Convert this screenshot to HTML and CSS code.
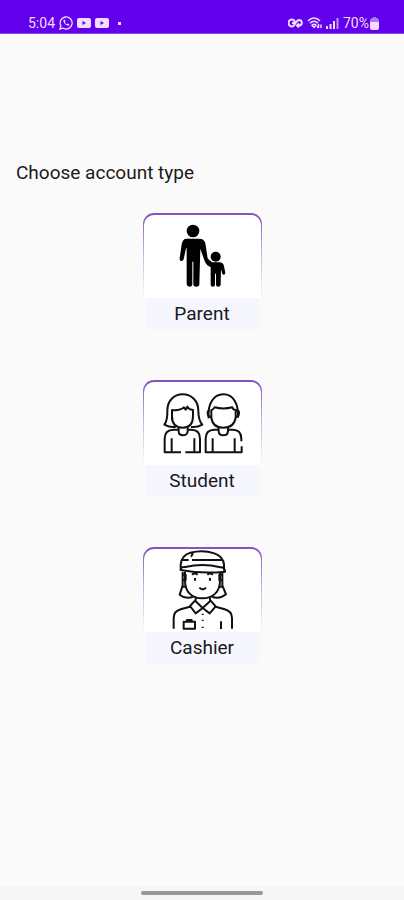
FILE: index.html
```html
<!DOCTYPE html>
<html lang="en">
<head>
<meta charset="utf-8">
<meta name="viewport" content="width=device-width, initial-scale=1">
<title>Choose account type</title>
<link rel="stylesheet" href="styles.css">
</head>
<body>
<header class="status">
  <div class="status-group">
    <span class="time">5:04</span>
    <svg class="icon" width="14" height="14" viewBox="0 0 14 14" fill="none" stroke="currentColor" stroke-width="1.3"><path d="M1 13l.9-3.2A6 6 0 1 1 4.300 12.200z"/><path d="M4.500 4c-.5 2.800 2.700 6 5.500 5.500l.3-1.300-1.600-.8-.9.8C6.800 7.800 6.200 7 5.800 6.200l.7-.9-.7-1.500z" fill="currentColor" stroke="none"/></svg>
    <svg class="icon" width="14" height="10" viewBox="0 0 14 10"><rect width="14" height="10" rx="2" fill="currentColor"/><path d="M5.500 3v4L9 5z" fill="#6200ee"/></svg>
    <svg class="icon" width="14" height="10" viewBox="0 0 14 10"><rect width="14" height="10" rx="2" fill="currentColor"/><path d="M5.500 3v4L9 5z" fill="#6200ee"/></svg>
    <span class="dot"></span>
  </div>
  <div class="status-group">
    <svg class="icon" width="15" height="10" viewBox="0 0 15 10" fill="none" stroke="currentColor" stroke-width="2"><path d="M7.500 5C6.500 2.500 5.500 1.500 4 1.500a3 3 0 0 0 0 7c2 0 2.500-2 3.500-3.500S9.500 2 11 2a2.800 2.800 0 0 1 0 5.600H9M4 5h3M11 5.500l-2 2 2 2"/></svg>
    <svg class="icon wifi" width="15" height="12" viewBox="0 0 15 12" fill="none" stroke="currentColor" stroke-width="1.500"><path d="M1 4c3.500-4 8.500-4 12 0M3 6.200c2.500-2.700 5.500-2.700 8 0M5 8.300c1.200-1.500 2.800-1.500 4 0L7 10.500z"/><path d="M11.500 7v4M10 9.500l1.500 1.500M14 11V7.500"/></svg>
    <svg class="icon" width="13" height="12" viewBox="0 0 13 12" fill="currentColor"><path d="M0 9h2v3H0zM3.500 7h2v5h-2zM7 4h2v8H7z"/><path d="M10.500 1h2v11h-2z" opacity=".65"/></svg>
    <span class="battery-text">70%</span>
    <svg class="icon" width="9" height="13" viewBox="0 0 9 13" fill="currentColor"><path d="M3 0h3v1h1.500L9 3v2H0V3l1.500-2H3z" opacity=".55"/><path d="M0 5h9v6a2 2 0 0 1-2 2H2a2 2 0 0 1-2-2z"/></svg>
  </div>
</header>
<main class="content">
  <h1 class="title">Choose account type</h1>
  <div class="choices">
    <button class="card" type="button">
      <span class="picture">
        <svg viewBox="24 24 360 252" aria-hidden="true">
          <circle cx="174" cy="78" r="19"/>
          <path d="M154 101h40q14 0 17 14l7 45q-2 8-10 6l-12-35-3 107q0 7-9 7t-9-7v-68h-3v68q0 7-8 7t-9-7V130h-2l-7 33q-2 6-7 5-6-1-5-8l6-42q3-17 14-17z"/>
          <circle cx="242" cy="155" r="15"/>
          <path d="M217 160l14 12h22q12 0 14 12l4 19q0 6-5 6-4 0-5-6l-3-10-1 46q0 6-7 6t-7-6v-33h-3v33q0 6-7 6-6 0-6-6v-53q-11-2-18-17-1-8 8-9z"/>
        </svg>
      </span>
      <span class="label">Parent</span>
    </button>
    <button class="card" type="button">
      <span class="picture">
        <svg class="lines" viewBox="24 24 360 252" aria-hidden="true">
          <path d="M122 165q-18 2-34-7 10-14 9-42c0-30 20-49 46-49s47 19 47 49q0 28 12 42-15 9-34 7"/>
          <path d="M111 144v-30q24 3 36-8l5 7 5-9q4 9 17 10v18c0 23-11 35-31 35s-32-12-32-35z"/>
          <path d="M131 166v13q1 11 13 11t14-11v-13M131 173h-15q-27 0-27 27v41h49M151 241h44v-41q0-27-26-27h-11M110 199v42M178 199v42"/>
          <path d="M221 139c-4-42 14-72 44-72s46 28 44 70M229 114q5 0 10-8 26 7 53 0 3 8 10 8v22q-4 31-37 31t-36-31z"/>
          <path d="M224 115q-7 2-6 9 1 11 11 11M306 115q7 2 6 9-1 11-10 11M251 165v13q1 12 14 12t14-12v-13M251 173h-13q-26 0-26 27v41h108v-18M279 173h14q26 0 26 28v7M233 199v42M299 199v42"/>
        </svg>
      </span>
      <span class="label">Student</span>
    </button>
    <button class="card" type="button">
      <span class="picture">
        <svg class="lines" viewBox="24 24 360 252" aria-hidden="true">
          <path d="M137 94V77q2-28 29-36 38-10 72 2 27 9 29 34v18M137 93q0-11 14-9 53-13 105 1 14-1 14 13-68 7-133-5zM138 63h23M171 63h90M168 53l6-10"/>
          <path d="M150 98v27c0 33 20 53 52 53s53-20 53-53V98M143 99v40l-9 28q19 16 43 5M262 99v40l11 27q-20 17-45 6M144 107h8v16h-8M261 107h-8v16h8M144 143h10M252 143h10"/>
          <path d="M171 107q8-7 17 0M217 107q8-7 17 0M180 117v8M225 117v8M193 146q10 10 20 0"/>
          <path d="M182 176v11l21 20 22-20v-11M180 185l-15 16 17 22 21-16 21 16 18-21-15-17M165 203l-28 8q-21 6-21 26v32M242 203l27 8q22 6 22 26v32"/>
          <path d="M146 248h34v21h-34zM156 248v-5h14v5M258 247v23M203 224v4M203 242v4M203 263v4"/>
        </svg>
      </span>
      <span class="label">Cashier</span>
    </button>
  </div>
</main>
<footer class="nav"><span class="handle"></span></footer>
</body>
</html>
```
FILE: styles.css
```css
* {
  box-sizing: border-box;
}

body {
  margin: 0;
  min-height: 100vh;
  display: flex;
  flex-direction: column;
  background: #fafafa;
  color: #1a1a1a;
  font-family: Roboto, "Liberation Sans", sans-serif;
}

.status {
  display: flex;
  justify-content: space-between;
  align-items: flex-end;
  height: 34px;
  padding: 0 25px 2px 28px;
  background: #6200ee;
  border-bottom: 1px solid #8b4ce6;
  color: #f0dcfb;
  font-size: 14px;
  line-height: 16px;
}

.status-group {
  display: flex;
  align-items: center;
  gap: 4px;
}

.icon {
  flex: none;
}

.dot {
  width: 3px;
  height: 3px;
  margin-left: 5px;
  background: currentColor;
}

.battery-text {
  margin-right: -3px;
}

.content {
  flex: 1;
  padding: 126px 16px 0;
}

.title {
  margin: 0 0 28px;
  font-size: 19px;
  line-height: 25px;
  font-weight: 400;
}

.choices {
  display: flex;
  flex-direction: column;
  align-items: center;
  gap: 50px;
}

.card {
  display: flex;
  flex-direction: column;
  width: 119px;
  padding: 2px 1px 0;
  border: 0;
  border-radius: 11px 11px 4px 4px;
  background: linear-gradient(#8350bd, #c9b5e2 35%, #fafafa 72%);
  color: #1a1a1a;
  font: inherit;
  cursor: pointer;
}

.picture {
  display: block;
  height: 83px;
  border-radius: 10px 10px 0 0;
  background: #fff;
}

.picture svg {
  display: block;
  width: 120px;
  height: 84px;
  margin: -2px -1px 0;
  color: #000;
}

.lines {
  fill: none;
  stroke: #111;
  stroke-width: 6;
  stroke-linejoin: round;
}

.label {
  margin: 0 2px;
  border-radius: 0 0 4px 4px;
  background: #f5f6fe;
  font-size: 19px;
  line-height: 32px;
  text-align: center;
}

.nav {
  display: flex;
  justify-content: center;
  align-items: center;
  height: 14px;
  background: #f6f6f6;
}

.handle {
  width: 30%;
  height: 4px;
  border-radius: 2px;
  background: #999;
}
```
